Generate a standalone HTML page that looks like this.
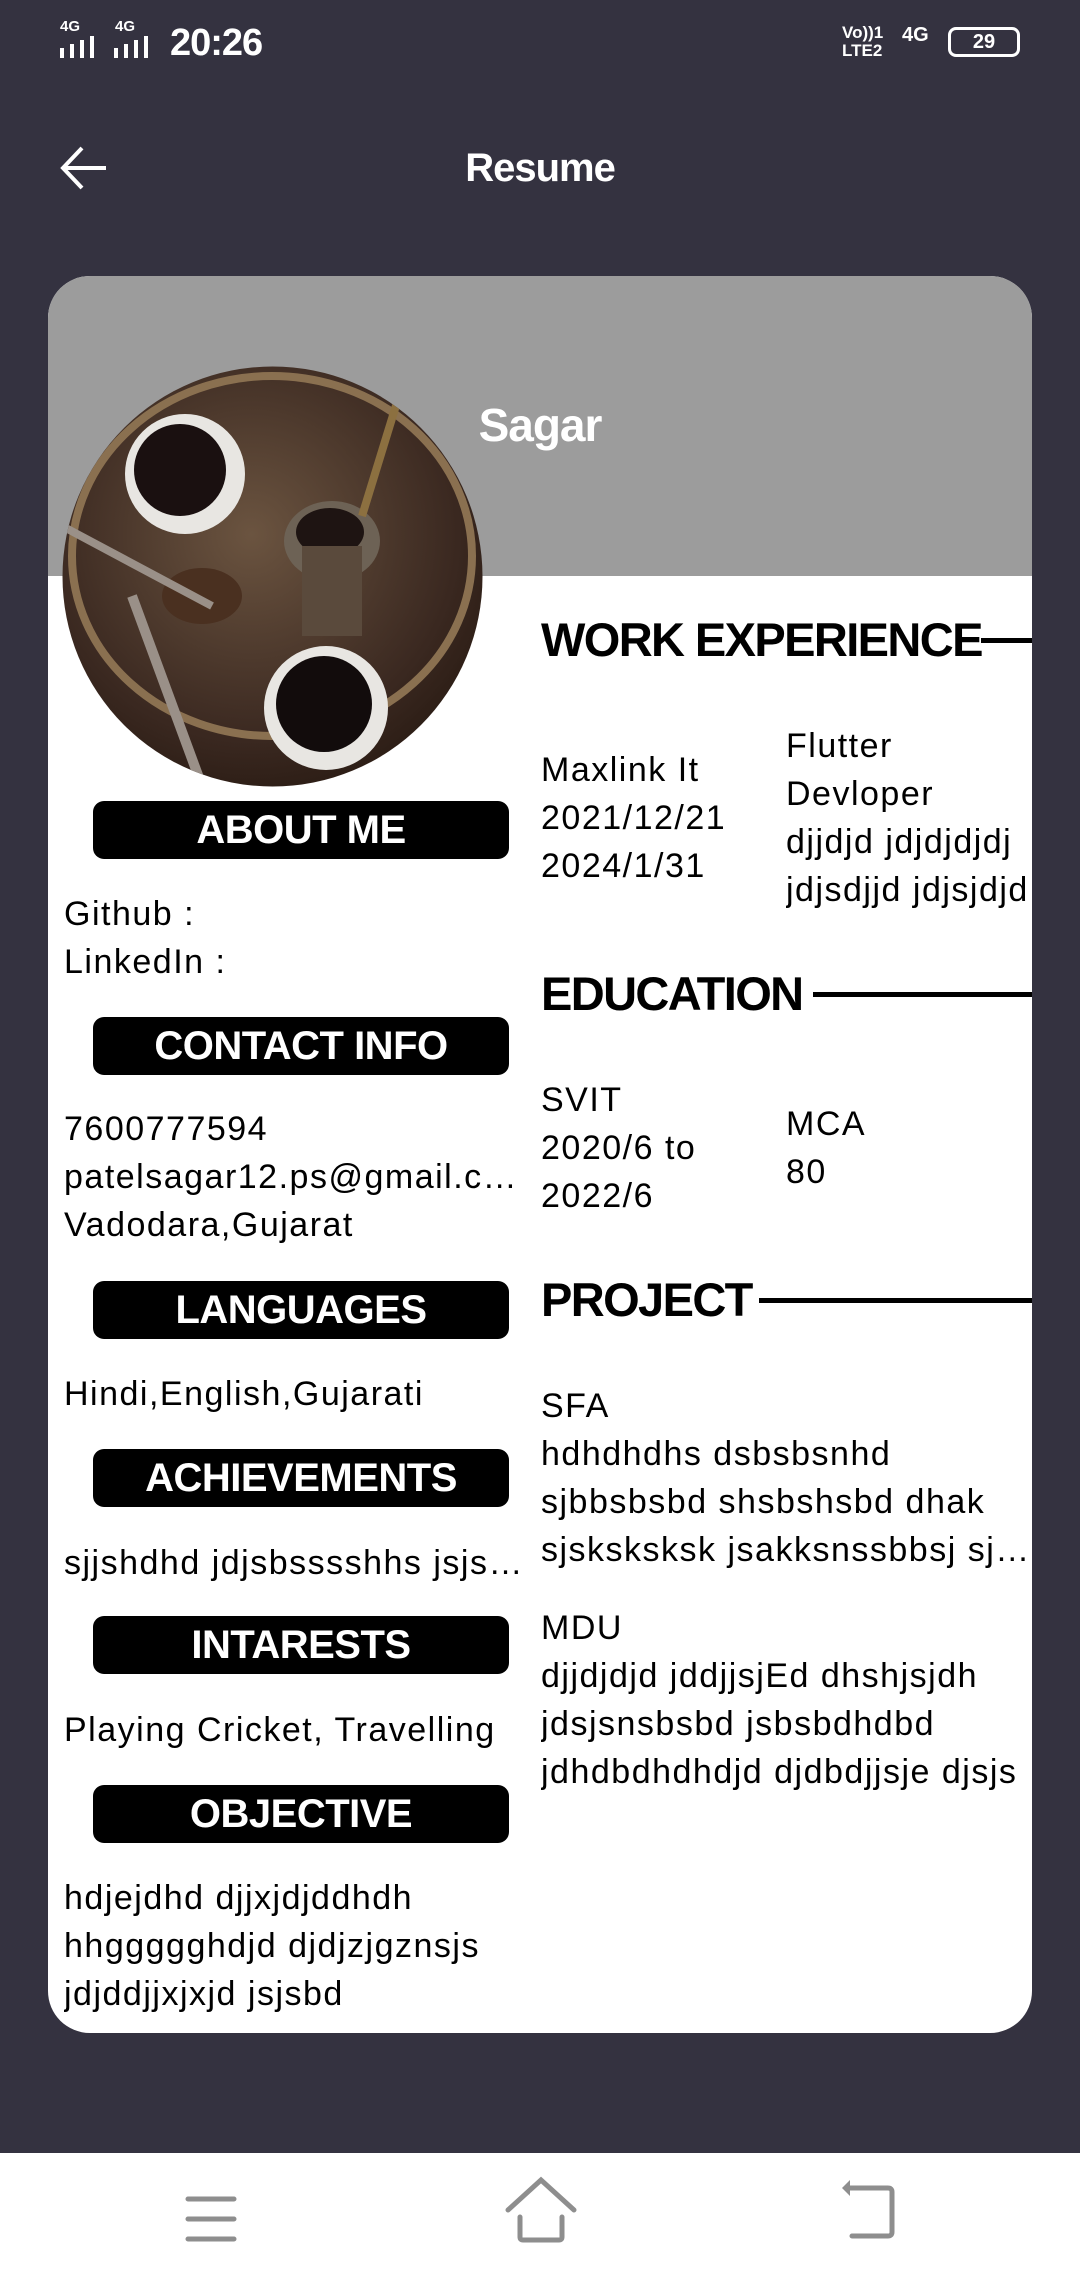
<!DOCTYPE html>
<html><head><meta charset="utf-8">
<style>
*{margin:0;padding:0;box-sizing:border-box}
body{width:1080px;height:2280px;background:#343240;position:relative;overflow:hidden;font-family:"Liberation Sans",sans-serif;color:#000}
.a{position:absolute;white-space:nowrap}
.t{font-size:34px;line-height:48px;letter-spacing:1.5px;overflow:hidden;text-overflow:ellipsis}
.pill{position:absolute;left:93px;width:416px;height:58px;background:#000;border-radius:11px;color:#fff;font-weight:bold;font-size:40px;line-height:58px;text-align:center;letter-spacing:-0.5px}
.h{position:absolute;font-weight:bold;font-size:47px;letter-spacing:-1.6px;line-height:56px}
.ln{position:absolute;height:5px;background:#000;right:48px}
</style></head><body>
<!-- status bar -->
<div class="a" style="left:60px;top:18px;color:#fff;font-size:15px;font-weight:bold">4G</div>
<div class="a" style="left:115px;top:18px;color:#fff;font-size:15px;font-weight:bold">4G</div>
<svg class="a" style="left:58px;top:34px" width="110" height="24"><g fill="#fff"><rect x="2" y="14" width="4" height="10"/><rect x="12" y="10" width="4" height="14"/><rect x="22" y="6" width="4" height="18"/><rect x="32" y="2" width="4" height="22"/><rect x="56" y="14" width="4" height="10"/><rect x="66" y="10" width="4" height="14"/><rect x="76" y="6" width="4" height="18"/><rect x="86" y="2" width="4" height="22"/></g></svg>
<div class="a" style="left:170px;top:22px;color:#fff;font-size:38px;font-weight:bold;letter-spacing:-1px">20:26</div>
<div class="a" style="left:842px;top:24px;color:#fff;font-size:17px;font-weight:bold;line-height:18px">Vo))1<br>LTE2</div>
<div class="a" style="left:902px;top:24px;color:#fff;font-size:20px;font-weight:bold">4G</div>
<div class="a" style="left:948px;top:27px;width:72px;height:30px;border:3px solid #fff;border-radius:8px;color:#fff;font-size:20px;font-weight:bold;text-align:center;line-height:24px">29</div>
<!-- header -->
<svg class="a" style="left:58px;top:144px" width="52" height="52"><path d="M48 24H6M24 4L5 24l19 20" stroke="#fff" stroke-width="4" fill="none"/></svg>
<div class="a" style="left:0;width:1080px;text-align:center;top:146px;color:#fff;font-size:40px;font-weight:bold;letter-spacing:-1px">Resume</div>
<!-- card -->
<div class="a" style="left:48px;top:276px;width:984px;height:1757px;background:#fff;border-radius:42px;overflow:hidden">
 <div style="height:300px;background:#9c9c9c"></div>
</div>
<div class="a" style="left:0;width:1080px;text-align:center;top:398px;color:#fff;font-size:46px;font-weight:bold;letter-spacing:-1px">Sagar</div>
<!-- photo -->
<svg class="a" style="left:62px;top:366px" width="421" height="421">
<defs><clipPath id="c"><circle cx="210.5" cy="210.5" r="210"/></clipPath>
<radialGradient id="g" cx="0.45" cy="0.4" r="0.7"><stop offset="0" stop-color="#6b5440"/><stop offset="0.7" stop-color="#3a2820"/><stop offset="1" stop-color="#24170f"/></radialGradient></defs>
<g clip-path="url(#c)">
<rect width="421" height="421" fill="url(#g)"/>
<ellipse cx="210" cy="190" rx="200" ry="180" fill="none" stroke="#8a7050" stroke-width="8"/>
<circle cx="123" cy="108" r="60" fill="#e8e6e2"/><circle cx="118" cy="104" r="46" fill="#1a1010"/>
<ellipse cx="270" cy="175" rx="48" ry="40" fill="#6d6255"/><ellipse cx="268" cy="166" rx="34" ry="24" fill="#1e1412"/>
<rect x="240" y="180" width="60" height="90" fill="#5a4a3c"/>
<circle cx="264" cy="342" r="62" fill="#e8e6e2"/><circle cx="262" cy="338" r="48" fill="#120c0c"/>
<ellipse cx="140" cy="230" rx="40" ry="28" fill="#4a3020"/>
<path d="M70 230L140 420" stroke="#9a9088" stroke-width="10"/>
<path d="M0 160L150 240" stroke="#9a9088" stroke-width="8"/>
<path d="M340 20L300 150" stroke="#8c7040" stroke-width="8"/>
</g></svg>
<!-- left column -->
<div class="pill" style="top:801px">ABOUT ME</div>
<div class="a t" style="left:64px;top:890px">Github :</div>
<div class="a t" style="left:64px;top:938px">LinkedIn :</div>
<div class="pill" style="top:1017px">CONTACT INFO</div>
<div class="a t" style="left:64px;top:1105px">7600777594</div>
<div class="a t" style="left:64px;top:1153px;width:466px">patelsagar12.ps@gmail.com</div>
<div class="a t" style="left:64px;top:1201px">Vadodara,Gujarat</div>
<div class="pill" style="top:1281px">LANGUAGES</div>
<div class="a t" style="left:64px;top:1370px">Hindi,English,Gujarati</div>
<div class="pill" style="top:1449px">ACHIEVEMENTS</div>
<div class="a t" style="left:64px;top:1539px;width:460px">sjjshdhd jdjsbsssshhs jsjsjsj</div>
<div class="pill" style="top:1616px">INTARESTS</div>
<div class="a t" style="left:64px;top:1706px;width:470px">Playing Cricket, Travelling</div>
<div class="pill" style="top:1785px">OBJECTIVE</div>
<div class="a t" style="left:64px;top:1874px">hdjejdhd djjxjdjddhdh</div>
<div class="a t" style="left:64px;top:1922px">hhggggghdjd djdjzjgznsjs</div>
<div class="a t" style="left:64px;top:1970px">jdjddjjxjxjd jsjsbd</div>
<!-- right column -->
<div class="h" style="left:541px;top:612px">WORK EXPERIENCE</div>
<div class="ln" style="left:981px;top:638px"></div>
<div class="a t" style="left:541px;top:746px">Maxlink It</div>
<div class="a t" style="left:541px;top:794px">2021/12/21</div>
<div class="a t" style="left:541px;top:842px">2024/1/31</div>
<div class="a t" style="left:786px;top:722px">Flutter</div>
<div class="a t" style="left:786px;top:770px">Devloper</div>
<div class="a t" style="left:786px;top:818px;width:246px">djjdjd jdjdjdjdj</div>
<div class="a t" style="left:786px;top:866px;width:246px">jdjsdjjd jdjsjdjd</div>
<div class="h" style="left:541px;top:966px">EDUCATION</div>
<div class="ln" style="left:813px;top:992px"></div>
<div class="a t" style="left:541px;top:1076px">SVIT</div>
<div class="a t" style="left:541px;top:1124px">2020/6 to</div>
<div class="a t" style="left:541px;top:1172px">2022/6</div>
<div class="a t" style="left:786px;top:1100px">MCA</div>
<div class="a t" style="left:786px;top:1148px">80</div>
<div class="h" style="left:541px;top:1272px">PROJECT</div>
<div class="ln" style="left:759px;top:1298px"></div>
<div class="a t" style="left:541px;top:1382px">SFA</div>
<div class="a t" style="left:541px;top:1430px;width:490px">hdhdhdhs dsbsbsnhd</div>
<div class="a t" style="left:541px;top:1478px;width:490px">sjbbsbsbd shsbshsbd dhak</div>
<div class="a t" style="left:541px;top:1526px;width:490px">sjsksksksk jsakksnssbbsj sjsjs</div>
<div class="a t" style="left:541px;top:1604px">MDU</div>
<div class="a t" style="left:541px;top:1652px;width:490px">djjdjdjd jddjjsjEd dhshjsjdh</div>
<div class="a t" style="left:541px;top:1700px;width:490px">jdsjsnsbsbd jsbsbdhdbd</div>
<div class="a t" style="left:541px;top:1748px;width:490px">jdhdbdhdhdjd djdbdjjsje djsjs</div>
<!-- nav bar -->
<div class="a" style="left:0;top:2153px;width:1080px;height:127px;background:#fff"></div>
<svg class="a" style="left:0;top:2153px" width="1080" height="127">
<g stroke="#8e8e8e" stroke-width="5" fill="none" stroke-linecap="round">
<path d="M188 46h46M188 66h46M188 86h46"/>
<path d="M508 57l33-30 33 30M520 64v20q0 3 3 3h36q3 0 3-3V64"/>
<path d="M850 35h38q4 0 4 4v40q0 4-4 4h-36"/>
</g><path d="M850 27v16l-8-8z" fill="#8e8e8e"/></svg>
</body></html>
